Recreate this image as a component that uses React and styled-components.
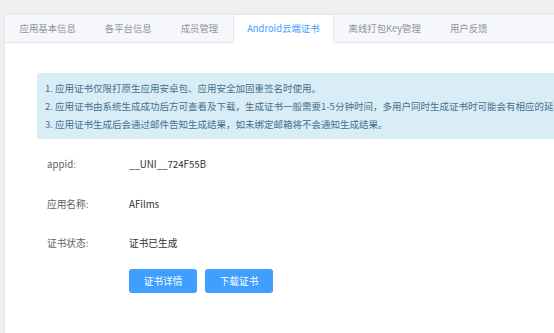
import * as React from "react";
import styled, { createGlobalStyle } from "styled-components";

const GlobalStyle = createGlobalStyle`
  html, body {
    margin: 0;
    padding: 0;
    background: #f0f0f0;
    overflow: hidden;
    font-family: "Noto Sans CJK SC", "Noto Sans", sans-serif;
  }
`;

const Page = styled.div`
  padding: 15px 0 0 5px;
  height: 100vh;
  box-sizing: border-box;
`;

const Card = styled.div`
  width: 900px;
  height: 100%;
  background: #fff;
  box-shadow: 0 0 4px rgba(0, 0, 0, 0.08);
`;

const TabBar = styled.div`
  display: flex;
  height: 27px;
  background: #f5f7fa;
  border-bottom: 1px solid #e4e7ed;
`;

const Tab = styled.div`
  padding: 0 13.5px;
  line-height: 27px;
  font-size: 9.4px;
  white-space: nowrap;
  color: ${(p) => (p.$active ? "#409eff" : "#909399")};
  background: ${(p) => (p.$active ? "#fff" : "transparent")};
  border-left: 1px solid ${(p) => (p.$active ? "#e4e7ed" : "transparent")};
  border-right: 1px solid ${(p) => (p.$active ? "#e4e7ed" : "transparent")};
  margin-bottom: ${(p) => (p.$active ? "-1px" : "0")};
  height: ${(p) => (p.$active ? "28px" : "27px")};
  box-sizing: border-box;
`;

const Content = styled.div`
  padding: 30px 32px;
`;

const Alert = styled.div`
  background: #d9edf7;
  color: #46708a;
  border-radius: 3px;
  padding: 6px 8px;
  font-size: 9.5px;
  line-height: 18px;
  white-space: nowrap;
`;

const Form = styled.div`
  padding: 15px 0 0 10px;
  display: flex;
  flex-direction: column;
  gap: 19.5px;
`;

const Row = styled.div`
  display: flex;
  align-items: center;
  height: 20px;
  font-size: 9.7px;
`;

const Label = styled.div`
  width: 82px;
  color: #606266;
`;

const Value = styled.div`
  color: #303133;
`;

const Actions = styled.div`
  display: flex;
  gap: 8px;
  padding-left: 82px;
  margin-top: -4px;
`;

const Button = styled.button`
  width: 68px;
  height: 24px;
  border: none;
  border-radius: 3px;
  background: #409eff;
  color: #fff;
  font-family: inherit;
  font-size: 9.7px;
  padding: 0;
`;

const tabs = [
  "应用基本信息",
  "各平台信息",
  "成员管理",
  "Android云端证书",
  "离线打包Key管理",
  "用户反馈",
];

const notes = [
  "1. 应用证书仅限打原生应用安卓包、应用安全加固重签名时使用。",
  "2. 应用证书由系统生成成功后方可查看及下载，生成证书一般需要1-5分钟时间，多用户同时生成证书时可能会有相应的延迟。",
  "3. 应用证书生成后会通过邮件告知生成结果，如未绑定邮箱将不会通知生成结果。",
];

const fields = [
  ["appid:", "__UNI__724F55B"],
  ["应用名称:", "AFilms"],
  ["证书状态:", "证书已生成"],
];

export default function App() {
  return (
    <Page>
      <GlobalStyle />
      <Card>
        <TabBar>
          {tabs.map((t, i) => (
            <Tab key={t} $active={i === 3}>
              {t}
            </Tab>
          ))}
        </TabBar>
        <Content>
          <Alert>
            {notes.map((n) => (
              <div key={n}>{n}</div>
            ))}
          </Alert>
          <Form>
            {fields.map(([label, value]) => (
              <Row key={label}>
                <Label>{label}</Label>
                <Value>{value}</Value>
              </Row>
            ))}
            <Actions>
              <Button>证书详情</Button>
              <Button>下载证书</Button>
            </Actions>
          </Form>
        </Content>
      </Card>
    </Page>
  );
}
